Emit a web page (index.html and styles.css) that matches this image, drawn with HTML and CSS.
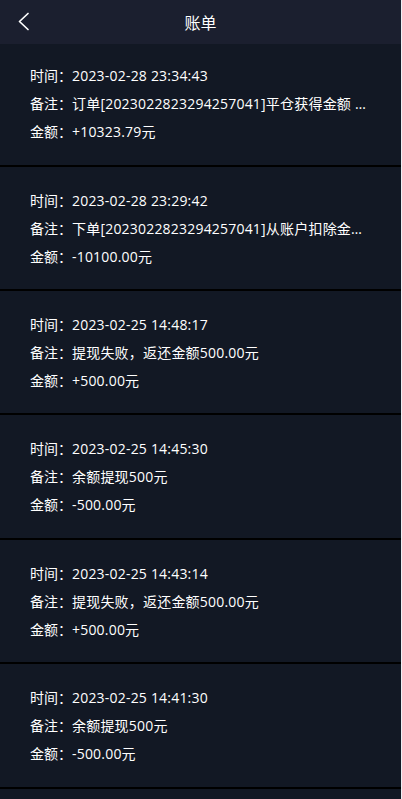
FILE: index.html
```html
<!DOCTYPE html>
<html lang="zh-CN">
<head>
<meta charset="utf-8">
<title>账单</title>
<link rel="stylesheet" href="styles.css">
</head>
<body>
<div class="page">
  <header class="topbar">
    <span class="back" aria-label="返回">
      <svg width="14" height="20" viewBox="0 0 14 20"><polyline points="11,1.5 2.5,9.5 11,17.5" fill="none" stroke="#ffffff" stroke-width="1.7" stroke-linecap="round" stroke-linejoin="round"/></svg>
    </span>
    <h1 class="title">账单</h1>
  </header>
  <ul class="list">
    <li class="item">
      <p class="row"><span class="label">时间：</span>2023-02-28 23:34:43</p>
      <p class="row"><span class="label">备注：</span>订单[2023022823294257041]平仓获得金额 10323.79元</p>
      <p class="row"><span class="label">金额：</span>+10323.79元</p>
    </li>
    <li class="item">
      <p class="row"><span class="label">时间：</span>2023-02-28 23:29:42</p>
      <p class="row"><span class="label">备注：</span>下单[2023022823294257041]从账户扣除金额10100.00元</p>
      <p class="row"><span class="label">金额：</span>-10100.00元</p>
    </li>
    <li class="item">
      <p class="row"><span class="label">时间：</span>2023-02-25 14:48:17</p>
      <p class="row"><span class="label">备注：</span>提现失败，返还金额500.00元</p>
      <p class="row"><span class="label">金额：</span>+500.00元</p>
    </li>
    <li class="item">
      <p class="row"><span class="label">时间：</span>2023-02-25 14:45:30</p>
      <p class="row"><span class="label">备注：</span>余额提现500元</p>
      <p class="row"><span class="label">金额：</span>-500.00元</p>
    </li>
    <li class="item">
      <p class="row"><span class="label">时间：</span>2023-02-25 14:43:14</p>
      <p class="row"><span class="label">备注：</span>提现失败，返还金额500.00元</p>
      <p class="row"><span class="label">金额：</span>+500.00元</p>
    </li>
    <li class="item">
      <p class="row"><span class="label">时间：</span>2023-02-25 14:41:30</p>
      <p class="row"><span class="label">备注：</span>余额提现500元</p>
      <p class="row"><span class="label">金额：</span>-500.00元</p>
    </li>
  </ul>
</div>
</body>
</html>
```

FILE: styles.css
```css
* { box-sizing: border-box; }
html, body { margin: 0; padding: 0; }
body {
  background: #eef0f4;
  font-family: "Open Sans", "Noto Sans CJK SC", sans-serif;
  color: #ffffff;
  height: 799px;
  overflow: hidden;
}
.page {
  width: 401px;
  min-height: 799px;
  background: #121824;
}
.topbar {
  height: 44px;
  background: #1b1f2f;
  display: flex;
  align-items: center;
  justify-content: center;
  position: relative;
}
.back {
  position: absolute;
  left: 17px;
  top: 12px;
  width: 14px;
  height: 20px;
  display: block;
}
.back svg { display: block; }
.title {
  margin: 0;
  font-family: "Noto Sans CJK SC", sans-serif;
  font-size: 16px;
  font-weight: 400;
  line-height: 44px;
}
.list {
  list-style: none;
  margin: 0;
  padding: 0;
}
.item {
  padding: 20px 30px 18.4px;
  border-bottom: 2px solid #000000;
}
.item:first-child { padding-top: 18.3px; }
.row {
  margin: 0;
  font-size: 14px;
  line-height: 28px;
  letter-spacing: 0.2px;
  white-space: nowrap;
  overflow: hidden;
  text-overflow: ellipsis;
}
.label {
  letter-spacing: 0;
}
```
